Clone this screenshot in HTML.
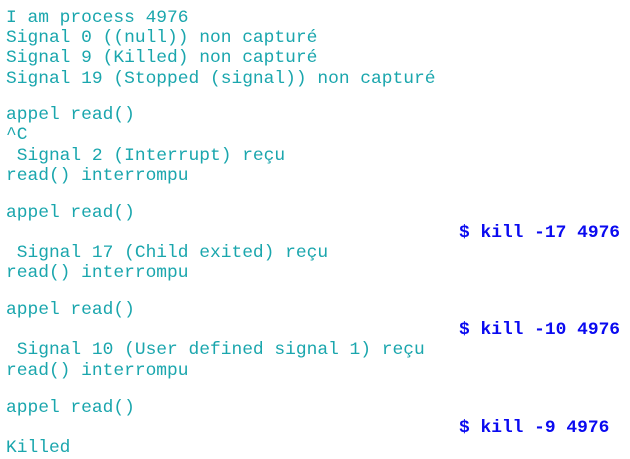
<!DOCTYPE html>
<html><head><meta charset="utf-8"><style>
body{margin:0;width:630px;height:459px;background:#fff;overflow:hidden;position:relative;font-family:"Liberation Mono",monospace;font-size:17.9px;}
div{position:absolute;left:6px;line-height:20px;white-space:pre;color:#1aa6ad;}
.k{left:459px;color:#0a0af0;font-weight:bold;}
</style></head><body>
<div style="top:8px">I am process 4976</div>
<div style="top:28px">Signal 0 ((null)) non capturé</div>
<div style="top:48px">Signal 9 (Killed) non capturé</div>
<div style="top:69px">Signal 19 (Stopped (signal)) non capturé</div>
<div style="top:105px">appel read()</div>
<div style="top:125px">^C</div>
<div style="top:146px"> Signal 2 (Interrupt) reçu</div>
<div style="top:166px">read() interrompu</div>
<div style="top:203px">appel read()</div>
<div class="k" style="top:223px">$ kill -17 4976</div>
<div style="top:243px"> Signal 17 (Child exited) reçu</div>
<div style="top:263px">read() interrompu</div>
<div style="top:300px">appel read()</div>
<div class="k" style="top:320px">$ kill -10 4976</div>
<div style="top:340px"> Signal 10 (User defined signal 1) reçu</div>
<div style="top:361px">read() interrompu</div>
<div style="top:398px">appel read()</div>
<div class="k" style="top:418px">$ kill -9 4976</div>
<div style="top:438px">Killed</div>
</body></html>
